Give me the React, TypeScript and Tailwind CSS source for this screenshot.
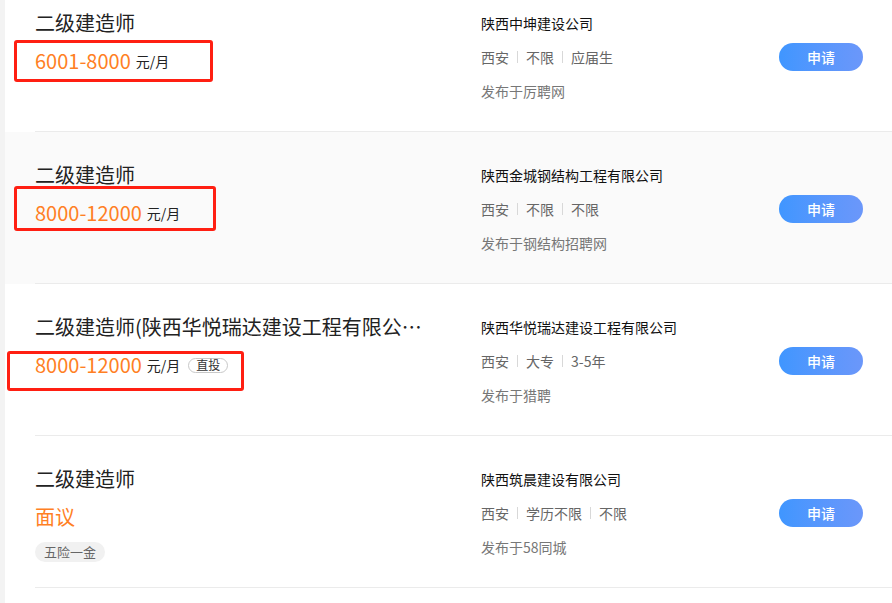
import React from 'react'

interface Job {
  title: string
  salary: string
  unit?: string
  direct?: boolean
  welfare?: string[]
  company: string
  tags: string[]
  source: string
  hover?: boolean
  mark?: string
}

const jobs: Job[] = [
  {
    title: '二级建造师',
    salary: '6001-8000',
    unit: '元/月',
    company: '陕西中坤建设公司',
    tags: ['西安', '不限', '应届生'],
    source: '发布于厉聘网',
    mark: 'left-[9px] top-[60px] w-[199px] h-[42px]',
  },
  {
    title: '二级建造师',
    salary: '8000-12000',
    unit: '元/月',
    company: '陕西金城钢结构工程有限公司',
    tags: ['西安', '不限', '不限'],
    source: '发布于钢结构招聘网',
    hover: true,
    mark: 'left-[9px] top-[54px] w-[202px] h-[45px]',
  },
  {
    title: '二级建造师(陕西华悦瑞达建设工程有限公司)',
    salary: '8000-12000',
    unit: '元/月',
    direct: true,
    company: '陕西华悦瑞达建设工程有限公司',
    tags: ['西安', '大专', '3-5年'],
    source: '发布于猎聘',
    mark: 'left-[2px] top-[67px] w-[237px] h-[40px]',
  },
  {
    title: '二级建造师',
    salary: '面议',
    welfare: ['五险一金'],
    company: '陕西筑晨建设有限公司',
    tags: ['西安', '学历不限', '不限'],
    source: '发布于58同城',
  },
]

const JobRow = ({ job }: { job: Job }) => (
  <div className={`relative h-[152px] pl-[30px] ${job.hover ? 'bg-[#fafafa]' : 'bg-white'}`}>
    <div className="flex h-full border-b border-[#ebebeb]">
      <div className="w-[446px] pt-[29px]">
        <div className="max-w-[390px] truncate text-[20px] leading-[28px] text-[#222]">{job.title}</div>
        <div className="mt-[12px] flex h-[24px] items-center">
          <span className="text-[20px] leading-[24px] text-[#ff7f24]">{job.salary}</span>
          {job.unit && <span className="ml-[5px] text-[14px] text-[#222]">{job.unit}</span>}
          {job.direct && (
            <span className="ml-[8px] flex h-[15px] items-center rounded-full border border-[#c8c8c8] px-[7px] text-[12px] leading-none text-[#333]">
              直投
            </span>
          )}
        </div>
        {job.welfare && (
          <div className="mt-[13px] flex gap-2">
            {job.welfare.map(w => (
              <span key={w} className="flex h-[20px] items-center rounded-full bg-[#f1f1f1] px-[9px] text-[13px] text-[#666]">
                {w}
              </span>
            ))}
          </div>
        )}
      </div>

      <div className="w-[298px] pt-[26px] text-[14px]">
        <div className="flex h-[34px] items-center text-[#111]">{job.company}</div>
        <div className="flex h-[34px] items-center text-[#666]">
          {job.tags.map((t, i) => (
            <React.Fragment key={i}>
              {i > 0 && <span className="mx-[8px] h-[12px] w-px bg-[#d8d8d8]" />}
              <span>{t}</span>
            </React.Fragment>
          ))}
        </div>
        <div className="flex h-[34px] items-center text-[#777]">{job.source}</div>
      </div>

      <div className="pt-[63px]">
        <button className="h-[28px] w-[84px] rounded-full bg-gradient-to-r from-[#3f96ff] to-[#6b97fa] text-[14px] font-medium text-white">
          申请
        </button>
      </div>
    </div>

    {job.mark && (
      <div className={`pointer-events-none absolute rounded-[3px] border-[3px] border-[#ff1f12] ${job.mark}`} />
    )}
  </div>
)

const App = () => {
  return (
    <div
      className="h-[603px] w-[892px] overflow-hidden border-l-[5px] border-[#f3f3f3] bg-white"
      style={{ fontFamily: '"Noto Sans CJK SC", "Noto Sans", sans-serif' }}
    >
      <div className="-mt-[20px]">
        {jobs.map((j, i) => (
          <JobRow key={i} job={j} />
        ))}
      </div>
    </div>
  )
}

export default App
